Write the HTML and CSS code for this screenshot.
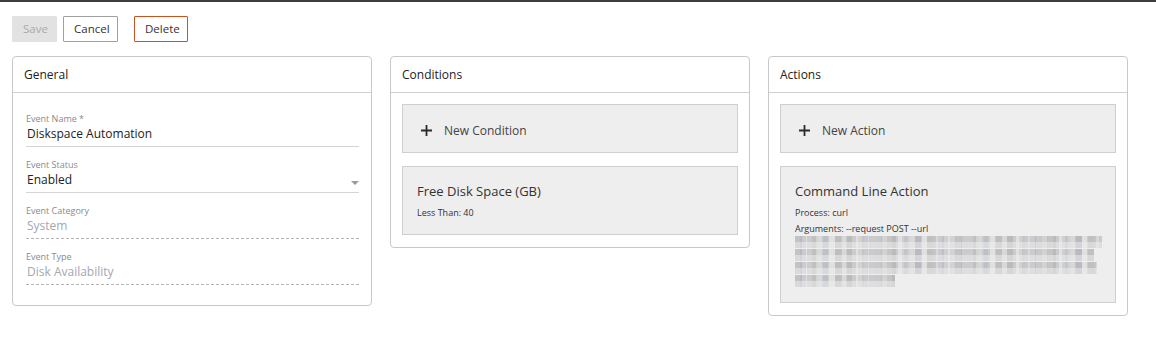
FILE: index.html
```
<!DOCTYPE html>
<html lang="en">
<head>
    <meta charset="UTF-8">
    <title>Event Automation</title>
    <link rel="stylesheet" href="styles.css">
</head>
<body>
    <div class="topbar"></div>
    <div class="toolbar">
        <button class="btn btn-save" disabled>Save</button>
        <button class="btn btn-cancel">Cancel</button>
        <button class="btn btn-delete">Delete</button>
    </div>
    <div class="cards">
        <div class="card">
            <div class="card-head">General</div>
            <div class="card-body general">
                <div class="field">
                    <div class="label">Event Name *</div>
                    <div class="value">Diskspace Automation</div>
                </div>
                <div class="field select">
                    <div class="label">Event Status</div>
                    <div class="value">Enabled</div>
                    <span class="caret"></span>
                </div>
                <div class="field readonly">
                    <div class="label">Event Category</div>
                    <div class="value">System</div>
                </div>
                <div class="field readonly">
                    <div class="label">Event Type</div>
                    <div class="value">Disk Availability</div>
                </div>
            </div>
        </div>

        <div class="card">
            <div class="card-head">Conditions</div>
            <div class="card-body">
                <div class="tile add">
                    <svg class="plus" width="11" height="11" viewBox="0 0 11 11"><path d="M5.5 0V11M0 5.5H11" stroke="#2b2b2b" stroke-width="1.8"/></svg>
                    New Condition
                </div>
                <div class="tile">
                    <div class="tile-title">Free Disk Space (GB)</div>
                    <div class="tile-line">Less Than: 40</div>
                </div>
            </div>
        </div>

        <div class="card">
            <div class="card-head">Actions</div>
            <div class="card-body">
                <div class="tile add">
                    <svg class="plus" width="11" height="11" viewBox="0 0 11 11"><path d="M5.5 0V11M0 5.5H11" stroke="#2b2b2b" stroke-width="1.8"/></svg>
                    New Action
                </div>
                <div class="tile">
                    <div class="tile-title">Command Line Action</div>
                    <div class="tile-line">Process: curl</div>
                    <div class="tile-line args">Arguments: --request POST --url</div>
                    <!-- redacted url -->
                    <div class="redact">
                        <div class="bar b1"></div>
                        <div class="bar b2"></div>
                        <div class="bar b3"></div>
                        <div class="bar b4"></div>
                    </div>
                </div>
            </div>
        </div>
    </div>
</body>
</html>
```

FILE: styles.css
```
*{
    margin: 0;
    padding: 0;
    box-sizing: border-box;
}
body{
    font-family: "Open Sans", "Noto Sans", sans-serif;
    color: #222;
    background: #fff;
}
.topbar{
    height: 2px;
    background: #3d3d3d;
}
.toolbar{
    display: flex;
    padding: 14px 12px 0 12px;
    gap: 6px;
}
.btn{
    height: 26px;
    padding: 0 10px;
    font-family: "Open Sans", sans-serif;
    font-size: 11.5px;
    line-height: 22px;
    background: #fff;
    color: #333;
    border: 1px solid #a0a0a0;
    border-radius: 1px;
}
.btn-save{
    width: 45px;
    background: #e2e2e2;
    border-color: #e2e2e2;
    color: #a9a9a9;
}
.btn-cancel{
    width: 55px;
}
.btn-delete{
    width: 54px;
    margin-left: 10px;
    border-color: #c9531f;
}
.cards{
    display: flex;
    align-items: flex-start;
    gap: 18px;
    padding: 14px 12px;
}
.card{
    width: 360px;
    border: 1px solid #c8c8c8;
    border-radius: 4px;
}
.card-head{
    height: 36px;
    padding: 0 11px;
    line-height: 35px;
    font-size: 12px;
    border-bottom: 1px solid #cfcfcf;
}
.card-body{
    padding: 11px 11px 12px 11px;
    display: flex;
    flex-direction: column;
    gap: 13px;
}
.card-body.general{
    padding: 20px 12px 20px 13px;
    gap: 12px;
}
.field{
    position: relative;
    border-bottom: 1px solid #d4d4d4;
    padding-bottom: 3px;
}
.field .label{
    font-size: 9px;
    color: #8a8a8a;
    line-height: 12px;
}
.field .value{
    font-size: 12px;
    line-height: 18px;
    padding-left: 1px;
}
.field.readonly{
    border-bottom: 1px dashed #b5b5b5;
}
.field.readonly .value{
    color: #a3a6b4;
}
.caret{
    position: absolute;
    right: 0;
    top: 22px;
    border-left: 4px solid transparent;
    border-right: 4px solid transparent;
    border-top: 4px solid #9a9a9a;
}
.tile{
    background: #eeeeee;
    border: 1px solid #cfcfcf;
    padding: 15px 14px 15px 14px;
}
.tile.add{
    height: 49px;
    padding: 3px 18px 0 18px;
    display: flex;
    align-items: center;
    font-size: 12px;
    color: #444;
}
.plus{
    margin-right: 12px;
}
.tile-title{
    font-size: 13px;
    color: #333;
    line-height: 18px;
    margin-bottom: 7px;
}
.tile-line{
    font-size: 9px;
    color: #333;
    line-height: 12px;
}
.tile-line.args{
    margin-top: 4px;
}
.bar{
    height: 12px;
    margin-top: 1px;
    background:
        linear-gradient(180deg, transparent 50%, rgba(240,240,240,0.5) 50%),
        repeating-linear-gradient(90deg, rgba(140,140,150,0.28) 0 7px, transparent 7px 12px, rgba(120,120,120,0.2) 12px 21px, transparent 21px 27px, rgba(150,160,175,0.25) 27px 33px, transparent 33px 40px),
        repeating-linear-gradient(90deg, #d8d8d8 0 5px, #cbcbcf 5px 11px, #e0e0e0 11px 17px, #d2d2d2 17px 23px);
}
.b1{ width: 307px; }
.b2{ width: 299px; }
.b3{ width: 302px; }
.b4{ width: 100px; }
```
